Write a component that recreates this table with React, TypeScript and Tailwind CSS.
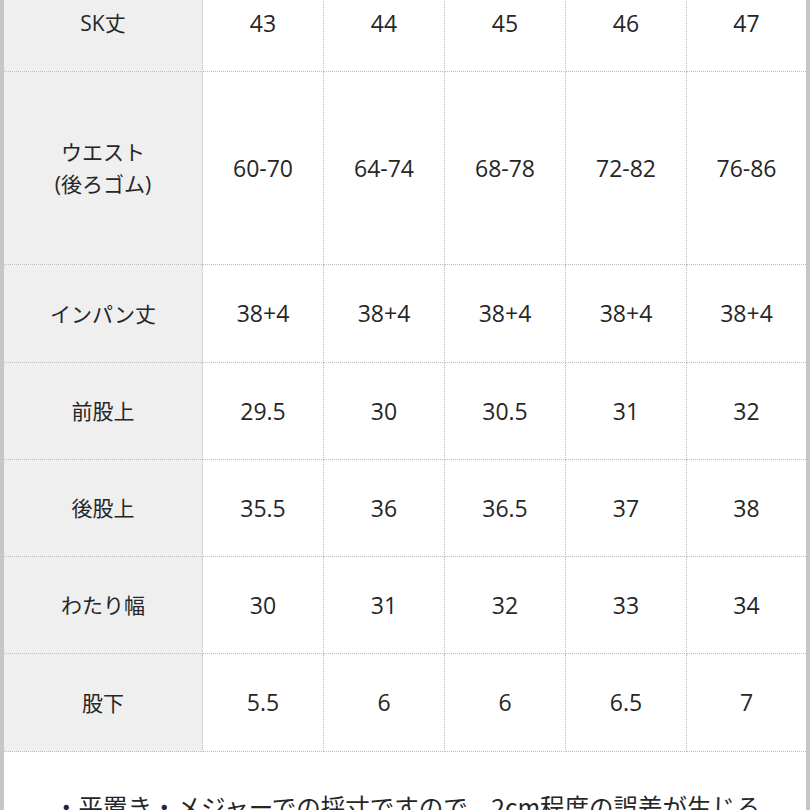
const rows: { label: string[]; values: string[]; h: string }[] = [
  { label: ["SK丈"], values: ["43", "44", "45", "46", "47"], h: "h-[97px]" },
  { label: ["ウエスト", "(後ろゴム)"], values: ["60-70", "64-74", "68-78", "72-82", "76-86"], h: "h-[193px]" },
  { label: ["インパン丈"], values: ["38+4", "38+4", "38+4", "38+4", "38+4"], h: "h-[98px]" },
  { label: ["前股上"], values: ["29.5", "30", "30.5", "31", "32"], h: "h-[97px]" },
  { label: ["後股上"], values: ["35.5", "36", "36.5", "37", "38"], h: "h-[97px]" },
  { label: ["わたり幅"], values: ["30", "31", "32", "33", "34"], h: "h-[97px]" },
  { label: ["股下"], values: ["5.5", "6", "6", "6.5", "7"], h: "h-[98px]" },
];

export default function App() {
  return (
    <div className="w-[810px] h-[810px] overflow-hidden bg-white border-l-4 border-r-4 border-[#c6c6c6] text-[#262626] font-['Open_Sans','Noto_Sans_CJK_JP',sans-serif]">
      <div className="-mt-[25px] grid grid-cols-[199px_121px_121px_121px_121px_1fr]">
        {rows.map((row, i) => (
          <div key={i} className="contents">
            <div className={`${row.h} flex flex-col items-center justify-center bg-[#efefef] border-b border-r border-dotted border-[#bdbdbd] text-[21px] leading-[32px]`}>
              {row.label.map((l) => (
                <span key={l}>{l}</span>
              ))}
            </div>
            {row.values.map((v, j) => (
              <div
                key={j}
                className={`${row.h} flex items-center justify-center border-b border-dotted border-[#bdbdbd] text-[23px] ${j < 4 ? "border-r" : ""}`}
              >
                {v}
              </div>
            ))}
          </div>
        ))}
      </div>
      <div className="pt-[37px] pl-[50px] text-[24.5px] leading-[36px] font-['Noto_Sans_CJK_JP',sans-serif] whitespace-nowrap">
        ・平置き・メジャーでの採寸ですので、2cm程度の誤差が生じる
      </div>
    </div>
  );
}
